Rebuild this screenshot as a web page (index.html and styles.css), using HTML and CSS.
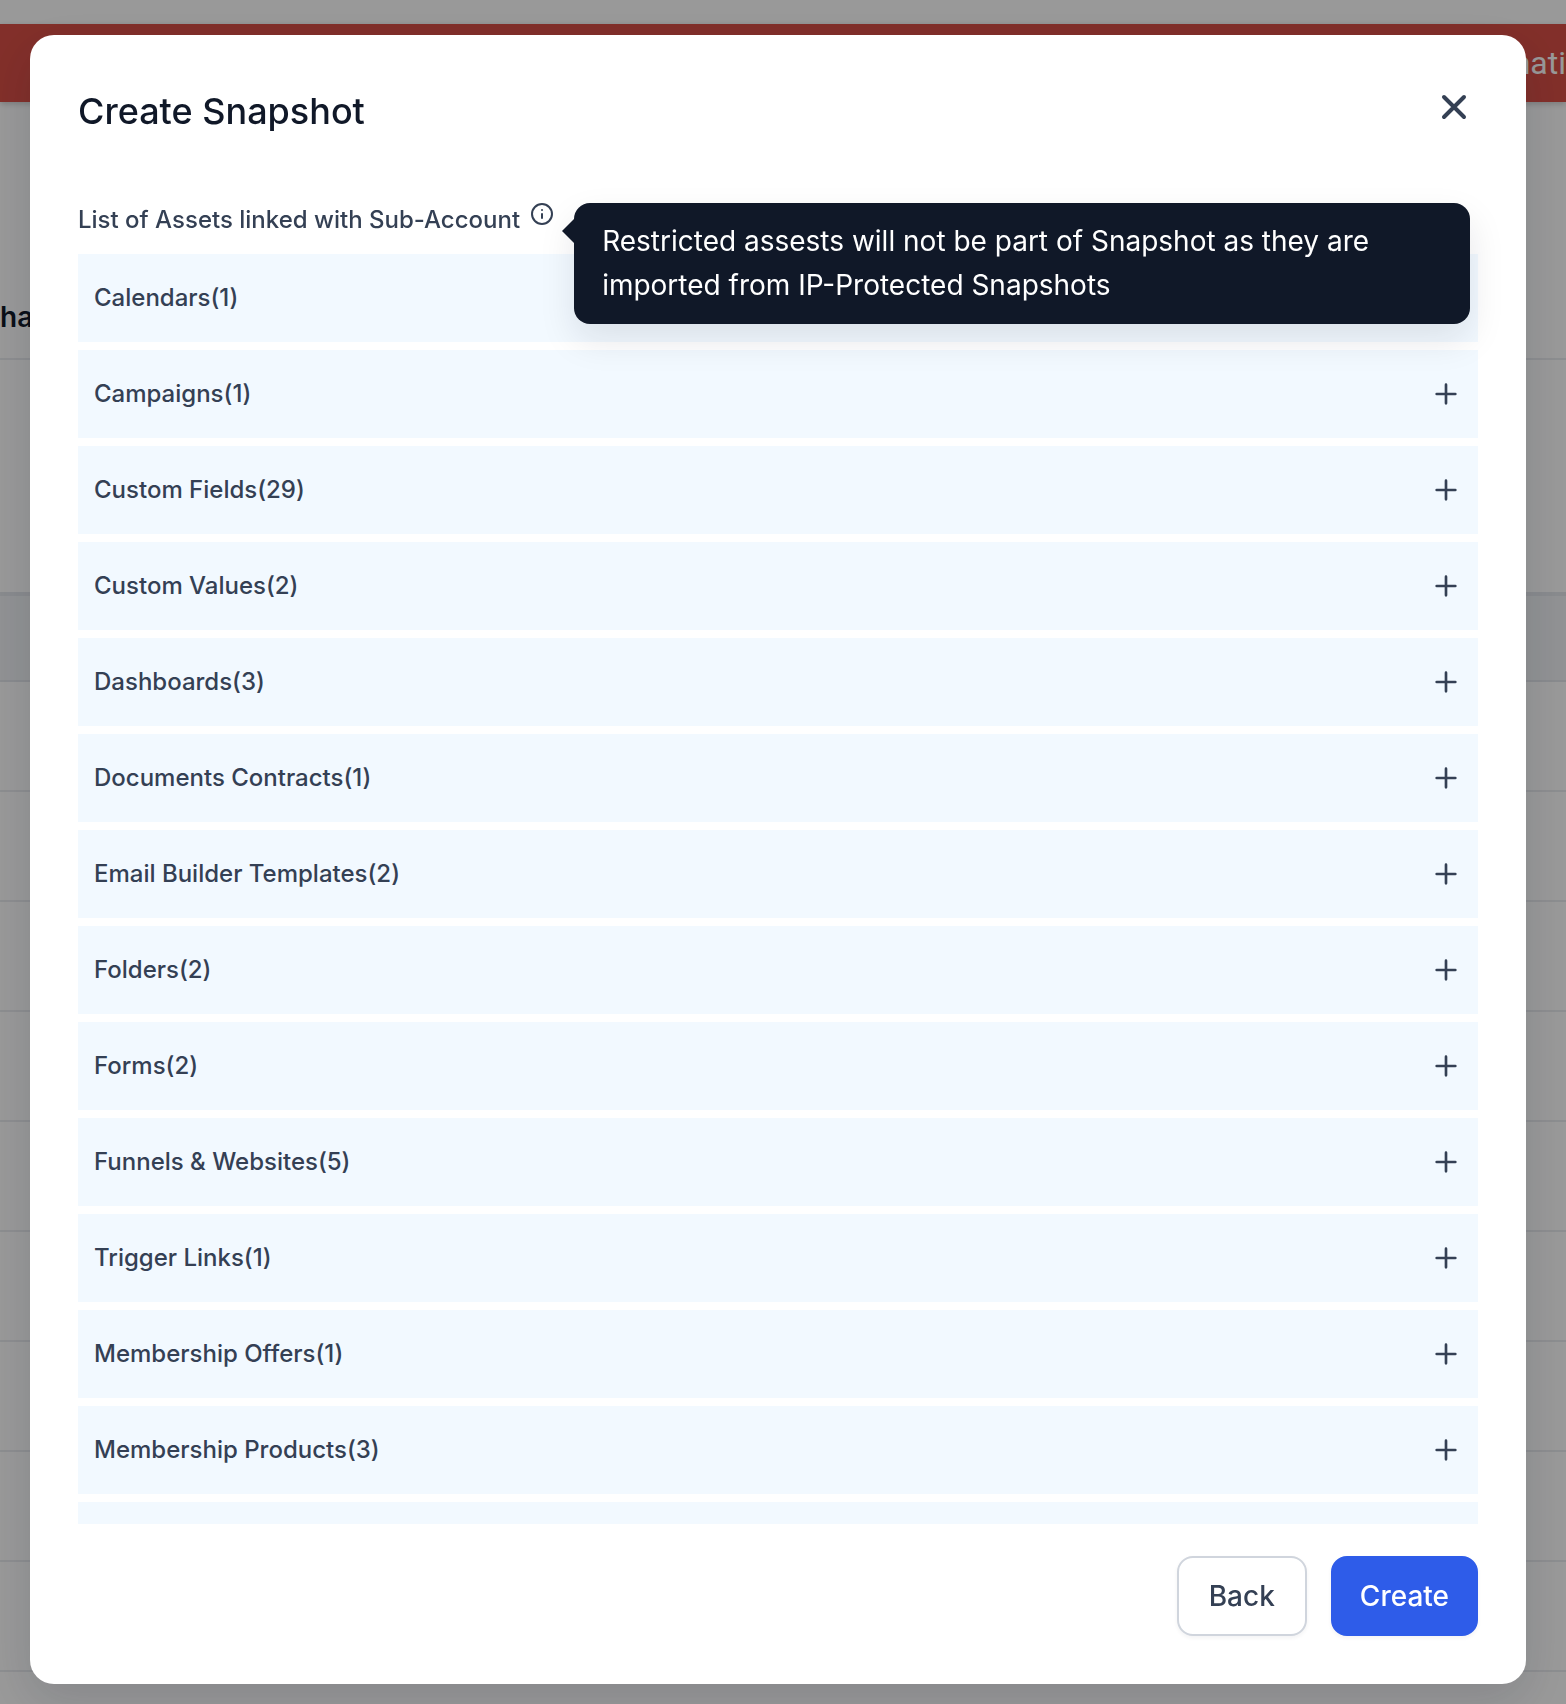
FILE: index.html
```html
<!DOCTYPE html>
<html lang="en">
<head>
  <meta charset="UTF-8" />
  <meta name="viewport" content="width=device-width, initial-scale=1.0" />
  <title>Create Snapshot</title>
  <link rel="stylesheet" href="styles.css">
</head>
<body>
  <!-- Page behind the modal -->
  <div class="page">
    <div class="banner">nati</div>
    <div class="page-title">ha</div>
    <div class="page-filters"></div>
    <div class="table-head"></div>
    <div class="table-rows"></div>
  </div>

  <div class="overlay">
    <div class="modal" role="dialog" aria-modal="true" aria-labelledby="modalTitle">
      <div class="modal-header">
        <h2 id="modalTitle">Create Snapshot</h2>
        <button type="button" class="close-btn" aria-label="Close">
          <svg viewBox="0 0 24 24"><path d="M17 7L7 17M7 7l10 10" /></svg>
        </button>
      </div>

      <div class="list-label">
        <span>List of Assets linked with Sub-Account</span>
        <span class="info">
          <svg viewBox="0 0 24 24" aria-hidden="true"><circle cx="12" cy="12" r="10" /><path d="M12 16v-4M12 8h.01" /></svg>
          <span class="tooltip" role="tooltip">Restricted assests will not be part of Snapshot as they are imported from IP-Protected Snapshots</span>
        </span>
      </div>

      <div class="asset-list" id="assetList"></div>

      <div class="modal-footer">
        <button type="button" class="btn">Back</button>
        <button type="button" class="btn btn-primary">Create</button>
      </div>
    </div>
  </div>

  <script>
    const assets = [
      { name: 'Calendars', count: 1 },
      { name: 'Campaigns', count: 1 },
      { name: 'Custom Fields', count: 29 },
      { name: 'Custom Values', count: 2 },
      { name: 'Dashboards', count: 3 },
      { name: 'Documents Contracts', count: 1 },
      { name: 'Email Builder Templates', count: 2 },
      { name: 'Folders', count: 2 },
      { name: 'Forms', count: 2 },
      { name: 'Funnels & Websites', count: 5 },
      { name: 'Trigger Links', count: 1 },
      { name: 'Membership Offers', count: 1 },
      { name: 'Membership Products', count: 3 }
    ];
    const assetList = document.getElementById('assetList');

    assets.forEach(asset => {
      const row = document.createElement('button');
      row.type = 'button';
      row.className = 'asset-row';
      row.innerHTML = `
        <span class="asset-name"></span>
        <svg viewBox="0 0 24 24" aria-hidden="true"><path d="M12 5v14M5 12h14" /></svg>
      `;
      row.querySelector('.asset-name').textContent = `${asset.name}(${asset.count})`;
      assetList.appendChild(row);
    });

    // Empty row that runs off the end of the list
    const more = document.createElement('div');
    more.className = 'asset-row';
    assetList.appendChild(more);
  </script>
</body>
</html>
```
FILE: styles.css
```css
* { box-sizing: border-box; }
body {
  margin: 0;
  font-family: Inter, "Liberation Sans", sans-serif;
  font-optical-sizing: none;
  color: #344054;
}
button { font: inherit; color: inherit; cursor: pointer; }
svg {
  display: block;
  fill: none;
  stroke: #344054;
  stroke-linecap: round;
  stroke-linejoin: round;
}

/* Page behind the modal */
.page {
  display: flex;
  flex-direction: column;
  height: 100vh;
  padding-top: 24px;
  overflow: hidden;
  background: #fff;
}
.banner {
  flex: none;
  height: 78px;
  background: #d94f46;
  color: #fff;
  font: 32px/78px Roboto, sans-serif;
  text-align: right;
  box-shadow: 0 2px 6px rgba(0, 0, 0, 0.2);
}
.page-title {
  flex: none;
  height: 258px;
  padding-top: 195px;
  border-bottom: 2px solid #eaecf0;
  color: #101828;
  font-size: 28px;
  font-weight: 600;
  line-height: 40px;
}
.page-filters { flex: none; height: 232px; }
.table-head {
  flex: none;
  height: 90px;
  background: #f2f4f7;
  border-top: 4px solid #e4e7ec;
  border-bottom: 2px solid #e4e7ec;
}
.table-rows {
  flex: 1;
  background: repeating-linear-gradient(#fff 0 108px, #eaecf0 108px 110px);
}

.overlay {
  position: fixed;
  inset: 0;
  display: flex;
  padding: 35px 40px 20px 30px;
  background: rgba(0, 0, 0, 0.4);
}
.modal {
  flex: 1;
  display: flex;
  flex-direction: column;
  padding: 48px;
  background: #fff;
  border-radius: 24px;
  box-shadow: 0 16px 48px rgba(16, 24, 40, 0.14);
}
.modal-header {
  display: flex;
  justify-content: space-between;
  align-items: flex-start;
  height: 112px;
}
.modal-header h2 {
  margin: 0;
  color: #101828;
  font-size: 36px;
  font-weight: 500;
  line-height: 56px;
}
.close-btn { padding: 0; border: none; background: none; }
.close-btn svg { width: 48px; height: 48px; stroke-width: 2; }

.list-label {
  display: flex;
  gap: 10px;
  padding-bottom: 10px;
  font-size: 24px;
  font-weight: 500;
  line-height: 49px;
}
.info { position: relative; padding-top: 7px; }
.info svg { width: 24px; height: 24px; stroke-width: 2; }

/* Tooltip to the right of the info icon */
.tooltip {
  position: absolute;
  z-index: 1;
  top: 8px;
  left: 44px;
  width: 896px;
  padding: 16px 28px 17px;
  border-radius: 16px;
  background: #101828;
  color: #fff;
  font-size: 28px;
  font-weight: 400;
  line-height: 44px;
  box-shadow: 0 16px 36px rgba(16, 24, 40, 0.1);
}
.tooltip::before {
  content: "";
  position: absolute;
  top: 16px;
  left: -12px;
  border: 12px solid transparent;
  border-left: none;
  border-right-color: #101828;
}

.asset-list {
  flex: 1;
  display: flex;
  flex-direction: column;
  gap: 8px;
  min-height: 0;
  overflow-y: auto;
  scrollbar-width: none;
}
.asset-row {
  flex: none;
  display: flex;
  justify-content: space-between;
  align-items: center;
  height: 88px;
  padding: 0 16px;
  border: none;
  background: #f2f9ff;
  font-size: 24px;
  font-weight: 500;
}
.asset-name { padding-bottom: 2px; }
.asset-row svg { width: 32px; height: 32px; stroke-width: 2; }

.modal-footer {
  display: flex;
  justify-content: flex-end;
  gap: 24px;
  padding-top: 32px;
}
.btn {
  height: 80px;
  padding: 0 30px;
  border: 2px solid #d0d5dd;
  border-radius: 16px;
  background: #fff;
  font-size: 28px;
  font-weight: 500;
  box-shadow: 0 2px 4px rgba(16, 24, 40, 0.05);
}
.btn-primary {
  padding: 0 27px;
  border-color: #2e5ce9;
  background: #2e5ce9;
  color: #fff;
}
```
